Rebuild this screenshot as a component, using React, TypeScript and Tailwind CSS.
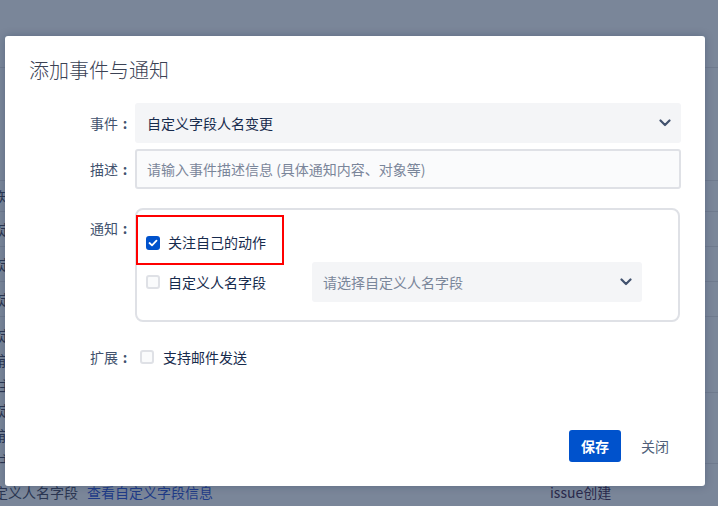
import React from 'react';

type BgRow = { h: string; lines: string[]; pad?: string };

// page behind the dialog (only the edges peek out)
const bgRows: BgRow[] = [
  { h: 'h-[113px]', lines: [] },
  { h: 'h-[31px]', lines: ['知'] },
  { h: 'h-[35px]', lines: ['定'] },
  { h: 'h-[35px]', lines: ['定'] },
  { h: 'h-[35px]', lines: ['定'] },
  { h: 'h-[76px]', lines: ['定', '前', '主'], pad: 'pt-[6px]' },
  { h: 'h-[71px]', lines: ['定', '前', '主'], pad: 'pt-[5px]' },
];

const Chevron = () => (
  <svg width="12" height="8" viewBox="0 0 12 8" fill="none">
    <path d="M1.5 1.5L6 6L10.5 1.5" stroke="#42526e" strokeWidth="2.2" strokeLinecap="round" strokeLinejoin="round" />
  </svg>
);

const Checkbox: React.FC<{ checked?: boolean }> = ({ checked }) =>
  checked ? (
    <span className="w-[14px] h-[14px] rounded-[3px] bg-[#0052cc] flex items-center justify-center shrink-0">
      <svg width="10" height="8" viewBox="0 0 10 8" fill="none">
        <path d="M1.5 4L4 6.3L8.5 1.7" stroke="white" strokeWidth="1.8" strokeLinecap="round" strokeLinejoin="round" />
      </svg>
    </span>
  ) : (
    <span className="w-[14px] h-[14px] rounded-[3px] bg-[#fafbfc] border-2 border-[#dfe1e6] shrink-0" />
  );

const Label: React.FC<{ text: string; className?: string }> = ({ text, className = '' }) => (
  <div className={`w-[106px] pr-[3px] flex justify-end text-[14px] leading-5 text-[#42526e] shrink-0 ${className}`}>
    <span>{text}</span>
    <span className="w-[14px] text-center font-bold">:</span>
  </div>
);

export default function App() {
  return (
    <div className="relative w-[718px] h-[506px] overflow-hidden bg-[#7a8699] font-['Noto_Sans_CJK_SC','Noto_Sans',sans-serif]">
      {/* background table */}
      <div className="flex flex-col text-[14px] text-[#2b3652]">
        <div className="h-[68px] border-b border-[#6f7a8e]" />
        {bgRows.map((r, i) => (
          <div key={i} className={`${r.h} border-b border-[#6f7a8e] flex`}>
            <div className={`w-[12px] overflow-hidden flex flex-col items-end leading-[25px] ${r.pad ?? 'justify-center'}`}>
              {r.lines.map((l, j) => (
                <span key={j}>{l}</span>
              ))}
            </div>
          </div>
        ))}
        <div className="h-[42px] flex items-center pt-[14px] whitespace-nowrap">
          <span className="ml-[-20px]">自定义人名字段</span>
          <span className="ml-[9px] text-[#1f3b87]">查看自定义字段信息</span>
          <span className="ml-[337px] text-[#2a2a4c]">issue创建</span>
        </div>
      </div>

      {/* dialog */}
      <div className="absolute left-[5px] top-[36px] w-[700px] h-[450px] bg-white rounded-[3px] shadow-[0_0_8px_rgba(9,30,66,0.25)] flex flex-col px-6 pt-5 pb-6">
        <h2 className="text-[20px] leading-7 text-[#3b4254] font-light">添加事件与通知</h2>

        <div className="flex items-center mt-[19px]">
          <Label text="事件" />
          <div className="flex-1 h-10 bg-[#f4f5f7] rounded-[3px] pl-3 pr-[10px] flex items-center justify-between">
            <span className="text-[14px] text-[#172b4d]">自定义字段人名变更</span>
            <Chevron />
          </div>
        </div>

        <div className="flex items-center mt-[6px]">
          <Label text="描述" />
          <div className="flex-1 h-10 bg-[#fafbfc] border-2 border-[#dfe1e6] rounded-[3px] pl-[10px] flex items-center">
            <span className="text-[14px] text-[#7a869a]">请输入事件描述信息 (具体通知内容、对象等)</span>
          </div>
        </div>

        <div className="flex items-start mt-[19px]">
          <Label text="通知" className="pt-[10px]" />
          <div className="relative w-[545px] border-2 border-[#dfe1e6] rounded-[8px] pt-[13px] pb-[18px] pl-[9px]">
            <div className="absolute left-[-1px] top-[5px] w-[148px] h-[50px] border-2 border-[#ff0000]" />
            <div className="h-[39px] flex items-center gap-2">
              <Checkbox checked />
              <span className="text-[14px] text-[#172b4d]">关注自己的动作</span>
            </div>
            <div className="h-10 flex items-center">
              <Checkbox />
              <span className="ml-2 w-[144px] text-[14px] text-[#172b4d]">自定义人名字段</span>
              <div className="w-[330px] h-10 bg-[#f4f5f7] rounded-[3px] pl-[11px] pr-[10px] flex items-center justify-between">
                <span className="text-[14px] text-[#7a869a]">请选择自定义人名字段</span>
                <Chevron />
              </div>
            </div>
          </div>
        </div>

        <div className="flex items-center mt-[25px]">
          <Label text="扩展" />
          <div className="ml-[5px] flex items-center gap-[9px]">
            <Checkbox />
            <span className="text-[14px] leading-5 text-[#172b4d]">支持邮件发送</span>
          </div>
        </div>

        <div className="mt-auto flex justify-end gap-2">
          <button className="h-8 px-3 rounded-[3px] bg-[#0052cc] text-white text-[14px] font-bold">保存</button>
          <button className="h-8 px-3 text-[14px] text-[#505f79]">关闭</button>
        </div>
      </div>
    </div>
  );
}
